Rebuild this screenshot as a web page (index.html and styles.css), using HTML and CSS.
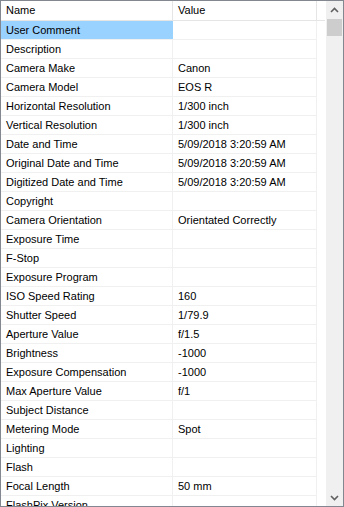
FILE: index.html
```html
<!DOCTYPE html>
<html lang="en">
<head>
    <meta charset="UTF-8">
    <title>Properties</title>
    <link rel="stylesheet" href="styles.css">
</head>
<body>
    <div class="window">
        <div class="list">
            <div class="row header">
                <div class="cell name">Name</div>
                <div class="cell value">Value</div>
            </div>
            <div class="row selected"><div class="cell name">User Comment</div><div class="cell value"></div></div>
            <div class="row"><div class="cell name">Description</div><div class="cell value"></div></div>
            <div class="row"><div class="cell name">Camera Make</div><div class="cell value">Canon</div></div>
            <div class="row"><div class="cell name">Camera Model</div><div class="cell value">EOS R</div></div>
            <div class="row"><div class="cell name">Horizontal Resolution</div><div class="cell value">1/300 inch</div></div>
            <div class="row"><div class="cell name">Vertical Resolution</div><div class="cell value">1/300 inch</div></div>
            <div class="row"><div class="cell name">Date and Time</div><div class="cell value">5/09/2018 3:20:59 AM</div></div>
            <div class="row"><div class="cell name">Original Date and Time</div><div class="cell value">5/09/2018 3:20:59 AM</div></div>
            <div class="row"><div class="cell name">Digitized Date and Time</div><div class="cell value">5/09/2018 3:20:59 AM</div></div>
            <div class="row"><div class="cell name">Copyright</div><div class="cell value"></div></div>
            <div class="row"><div class="cell name">Camera Orientation</div><div class="cell value">Orientated Correctly</div></div>
            <div class="row"><div class="cell name">Exposure Time</div><div class="cell value"></div></div>
            <div class="row"><div class="cell name">F-Stop</div><div class="cell value"></div></div>
            <div class="row"><div class="cell name">Exposure Program</div><div class="cell value"></div></div>
            <div class="row"><div class="cell name">ISO Speed Rating</div><div class="cell value">160</div></div>
            <div class="row"><div class="cell name">Shutter Speed</div><div class="cell value">1/79.9</div></div>
            <div class="row"><div class="cell name">Aperture Value</div><div class="cell value">f/1.5</div></div>
            <div class="row"><div class="cell name">Brightness</div><div class="cell value">-1000</div></div>
            <div class="row"><div class="cell name">Exposure Compensation</div><div class="cell value">-1000</div></div>
            <div class="row"><div class="cell name">Max Aperture Value</div><div class="cell value">f/1</div></div>
            <div class="row"><div class="cell name">Subject Distance</div><div class="cell value"></div></div>
            <div class="row"><div class="cell name">Metering Mode</div><div class="cell value">Spot</div></div>
            <div class="row"><div class="cell name">Lighting</div><div class="cell value"></div></div>
            <div class="row"><div class="cell name">Flash</div><div class="cell value"></div></div>
            <div class="row"><div class="cell name">Focal Length</div><div class="cell value">50 mm</div></div>
            <div class="row"><div class="cell name">FlashPix Version</div><div class="cell value"></div></div>
        </div>
        <div class="scrollbar">
            <div class="arrow">
                <svg width="9" height="6" viewBox="0 0 9 6"><path d="M1 5 L4.5 1.5 L8 5" fill="none" stroke="#606060" stroke-width="1.6"/></svg>
            </div>
            <div class="thumb"></div>
            <div class="track"></div>
            <div class="arrow">
                <svg width="9" height="6" viewBox="0 0 9 6"><path d="M1 1 L4.5 4.5 L8 1" fill="none" stroke="#606060" stroke-width="1.6"/></svg>
            </div>
        </div>
    </div>
</body>
</html>
```

FILE: styles.css
```css
body {
    margin: 0;
    font-family: "Liberation Sans", Arial, sans-serif;
    font-size: 11px;
    color: #000;
    background: #fff;
}

.window {
    width: 342px;
    height: 505px;
    border: 1px solid #828790;
    display: flex;
    overflow: hidden;
}

.list {
    flex: 1;
    overflow: hidden;
}

.row {
    display: flex;
    height: 18px;
    border-bottom: 1px solid #f0f0f0;
    width: 316px;
}

.row.header {
    height: 19px;
    border-bottom: 1px solid #e5e5e5;
    width: 324px;
}

.cell {
    box-sizing: border-box;
    padding-left: 5px;
    line-height: 18px;
    white-space: nowrap;
    overflow: hidden;
}

.header .cell {
    line-height: 19px;
}

.name {
    width: 172px;
    border-right: 1px solid #f0f0f0;
}

.value {
    width: 144px;
    border-right: 1px solid #f0f0f0;
}

.header .name,
.header .value {
    border-right-color: #e5e5e5;
}

.selected .name {
    background: #99d1ff;
    border-right-color: #99d1ff;
}

.scrollbar {
    width: 17px;
    background: #f0f0f0;
    display: flex;
    flex-direction: column;
}

.arrow {
    height: 17px;
    display: flex;
    align-items: center;
    justify-content: center;
}

.thumb {
    height: 17px;
    margin: 1px 1px 0 1px;
    background: #cdcdcd;
}

.track {
    flex: 1;
}
```
